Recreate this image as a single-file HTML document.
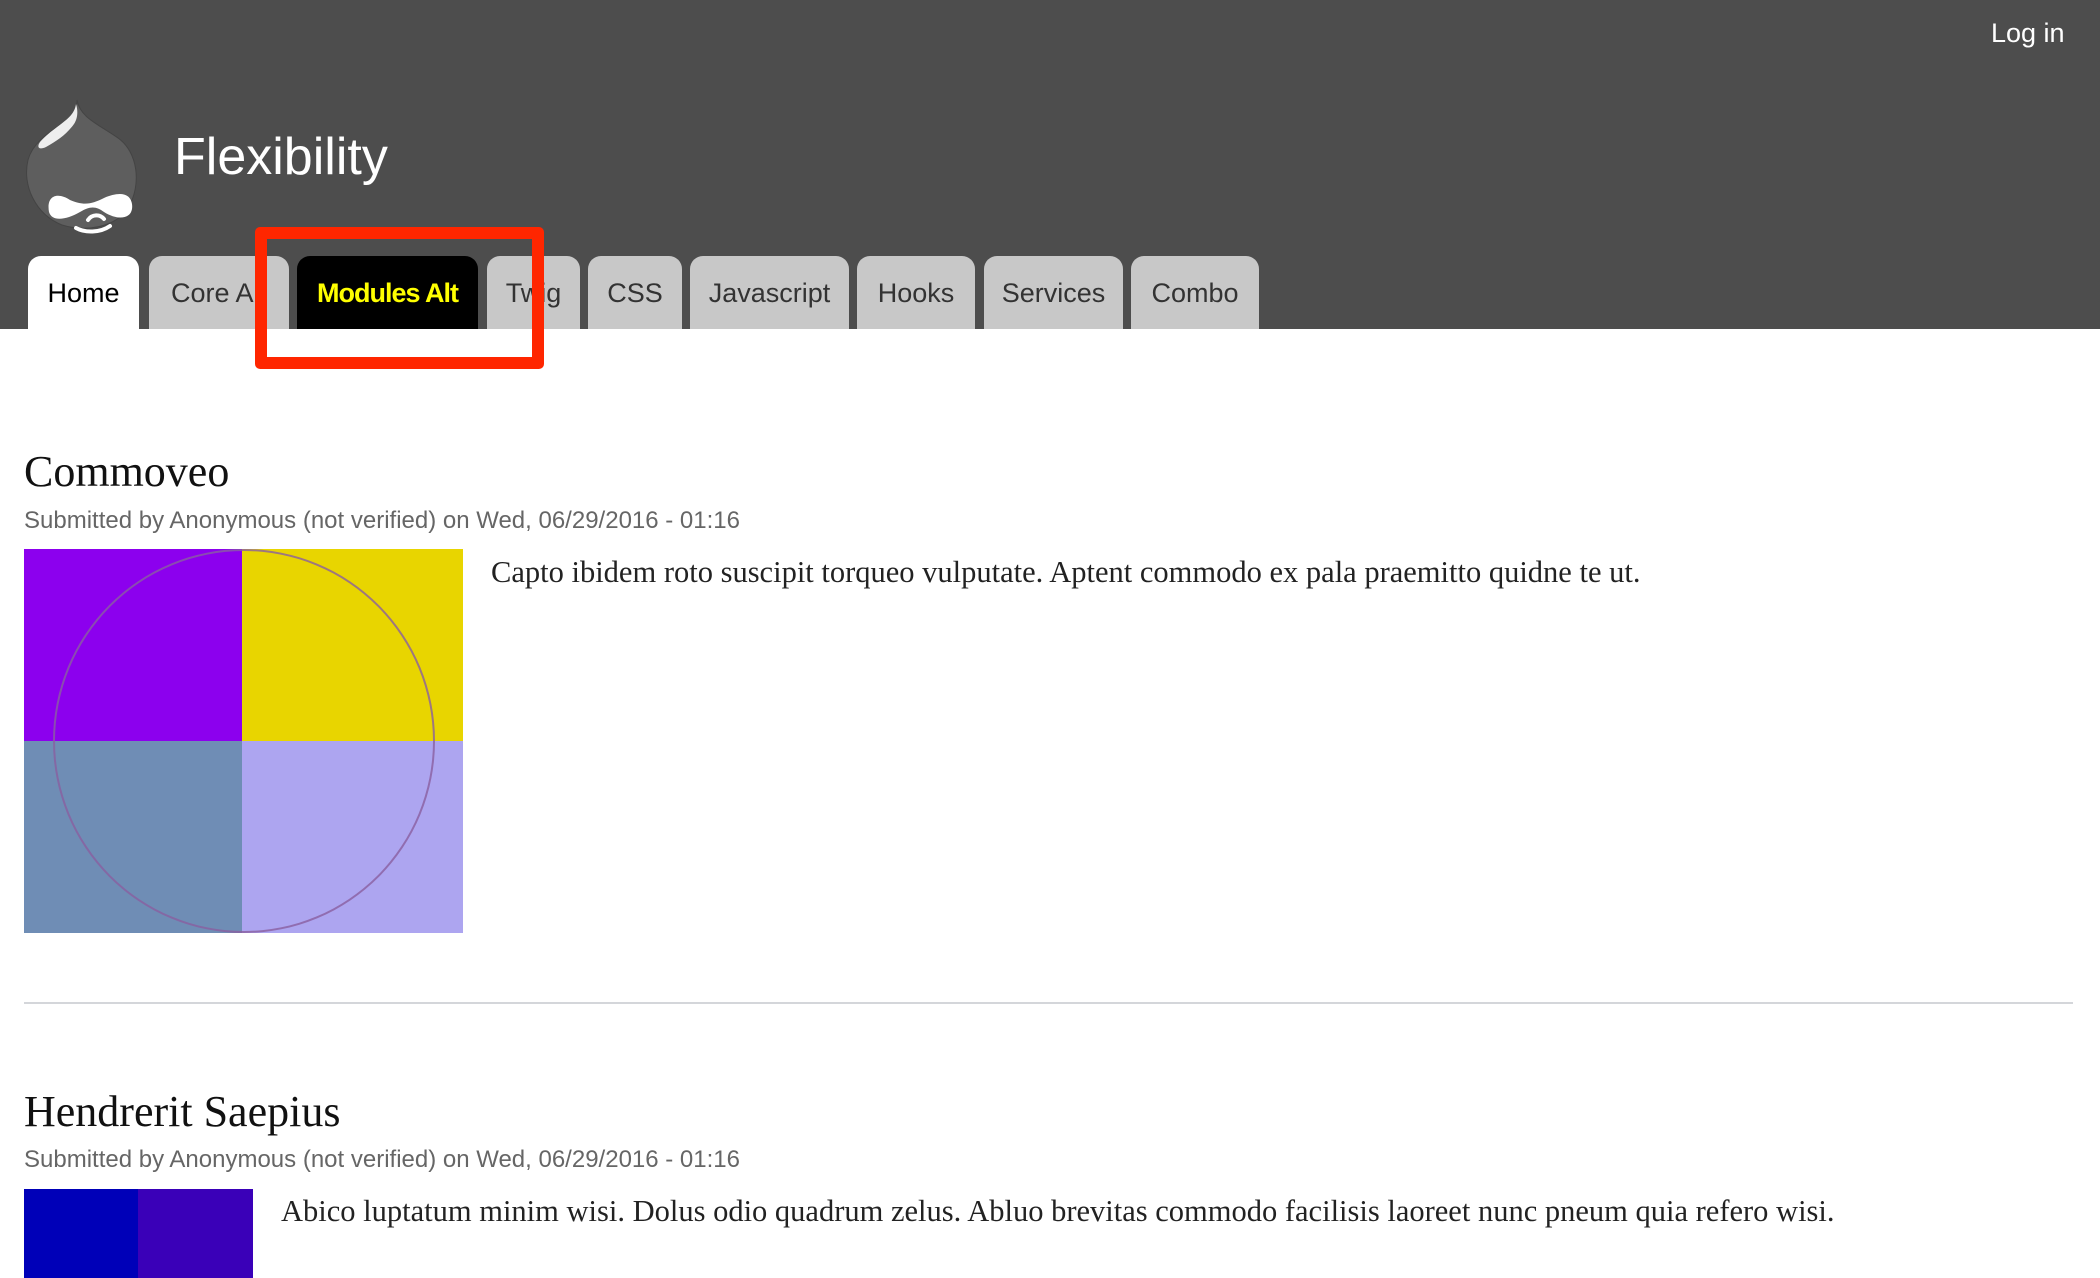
<!DOCTYPE html>
<html><head><meta charset="utf-8"><style>
*{margin:0;padding:0;box-sizing:border-box}
body{width:2100px;height:1278px;overflow:hidden;background:#fff;font-family:"Liberation Sans",sans-serif;position:relative}
.hdr{position:absolute;left:0;top:0;width:2100px;height:329px;background:#4d4d4d}
.login{position:absolute;left:1991px;top:18px;color:#fff;font-size:27px}
.title{position:absolute;left:174px;top:127px;color:#fff;font-size:52px;line-height:60px}
.tab{position:absolute;top:256px;height:73px;background:#c8c8c8;border-radius:13px 13px 0 0;color:#333;font-size:27px;text-align:center;line-height:74px}
.red{position:absolute;left:255px;top:227px;width:289px;height:142px;border:12px solid #ff2600;border-radius:5px}
h2{position:absolute;left:24px;font-family:"Liberation Serif",serif;font-weight:normal;font-size:44px;color:#111}
.meta{position:absolute;left:24px;font-size:24px;color:#666}
.body{position:absolute;font-family:"Liberation Serif",serif;font-size:30.5px;color:#222}
</style></head><body>
<div class="hdr"></div>
<div class="login">Log in</div>
<svg style="position:absolute;left:20px;top:95px" width="130" height="140" viewBox="20 95 130 140">
<path d="M77 100 C80 118 100 125 118 138 C138 152 142 185 128 208 C115 228 85 232 62 225 C35 214 22 185 28 160 C34 138 58 128 70 118 C75 113 77 106 77 100Z" fill="#5e5e5e" stroke="#444" stroke-width="1"/>
<path d="M76 104 C74 120 55 125 40 142 C36 148 40 150 46 147 C58 140 66 135 74 124 C78 118 78 110 76 104Z" fill="#eee"/>
<path d="M70 200 C58 192 46 195 49 212 C52 222 66 220 80 212 C90 206 96 206 104 212 C120 222 134 218 132 204 C130 192 118 192 104 198 C92 204 84 206 70 200Z" fill="#fff"/>
<path d="M76 228 C85 233 100 233 110 226" stroke="#fff" stroke-width="4" fill="none" stroke-linecap="round"/>
<path d="M88 220 C92 214 100 214 104 219" stroke="#fff" stroke-width="4" fill="none" stroke-linecap="round"/>
</svg>
<div class="title">Flexibility</div>
<div class="tab" style="left:28px;width:111px;background:#fff;color:#000">Home</div>
<div class="tab" style="left:149px;width:140px">Core Alt</div>
<div class="tab" style="left:297px;width:181px;background:#000;color:#ff0;font-weight:bold;letter-spacing:-1px">Modules Alt</div>
<div class="tab" style="left:487px;width:93px">Twig</div>
<div class="tab" style="left:588px;width:94px">CSS</div>
<div class="tab" style="left:690px;width:159px">Javascript</div>
<div class="tab" style="left:857px;width:118px">Hooks</div>
<div class="tab" style="left:984px;width:139px">Services</div>
<div class="tab" style="left:1131px;width:128px">Combo</div>
<div class="red"></div>

<h2 style="top:446px">Commoveo</h2>
<div class="meta" style="top:507px">Submitted by Anonymous (not verified) on Wed, 06/29/2016 - 01:16</div>
<div style="position:absolute;left:24px;top:549px;width:439px;height:384px;overflow:hidden">
<div style="position:absolute;left:0;top:0;width:218px;height:192px;background:#8c00ee"></div>
<div style="position:absolute;left:218px;top:0;width:221px;height:192px;background:#e8d500"></div>
<div style="position:absolute;left:0;top:192px;width:218px;height:192px;background:#6f8db5"></div>
<div style="position:absolute;left:218px;top:192px;width:221px;height:192px;background:#ada5f0"></div>
<div style="position:absolute;left:29px;top:0;width:382px;height:384px;border:2px solid #8a5fa0;border-radius:50%;opacity:.8"></div>
</div>
<div class="body" style="left:491px;top:555px">Capto ibidem roto suscipit torqueo vulputate. Aptent commodo ex pala praemitto quidne te ut.</div>
<div style="position:absolute;left:24px;top:1002px;width:2049px;height:2px;background:#d4d6da"></div>
<h2 style="top:1086px">Hendrerit Saepius</h2>
<div class="meta" style="top:1146px">Submitted by Anonymous (not verified) on Wed, 06/29/2016 - 01:16</div>
<div style="position:absolute;left:24px;top:1189px;width:114px;height:89px;background:#0000b8"></div>
<div style="position:absolute;left:138px;top:1189px;width:115px;height:89px;background:#3a00b8"></div>
<div class="body" style="left:281px;top:1194px">Abico luptatum minim wisi. Dolus odio quadrum zelus. Abluo brevitas commodo facilisis laoreet nunc pneum quia refero wisi.</div>
</body></html>
